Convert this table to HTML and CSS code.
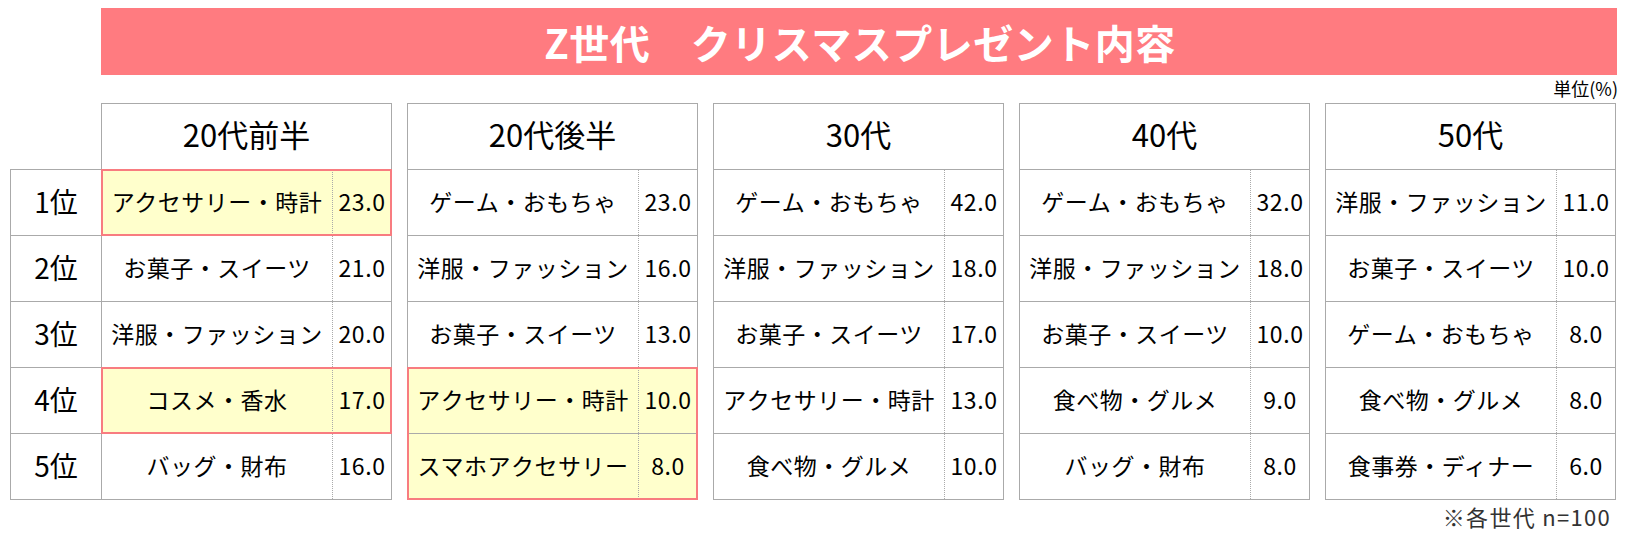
FILE: index.html
```html
<!DOCTYPE html>
<html lang="ja">
<head>
<meta charset="utf-8">
<title>Z世代 クリスマスプレゼント内容</title>
<link rel="stylesheet" href="styles.css">
</head>
<body>
<div class="page">
  <div class="banner">Z世代　クリスマスプレゼント内容</div>
  <div class="unit">単位(%)</div>
  <div class="tables">
    <div class="ranks">
      <div class="rank">1位</div>
      <div class="rank">2位</div>
      <div class="rank">3位</div>
      <div class="rank">4位</div>
      <div class="rank">5位</div>
    </div>

    <div class="panel">
      <div class="head">20代前半</div>
      <div class="hl">
        <div class="row"><div class="label">アクセサリー・時計</div><div class="val">23.0</div></div>
      </div>
      <div class="row"><div class="label">お菓子・スイーツ</div><div class="val">21.0</div></div>
      <div class="row"><div class="label">洋服・ファッション</div><div class="val">20.0</div></div>
      <div class="hl">
        <div class="row"><div class="label">コスメ・香水</div><div class="val">17.0</div></div>
      </div>
      <div class="row"><div class="label">バッグ・財布</div><div class="val">16.0</div></div>
    </div>

    <div class="panel">
      <div class="head">20代後半</div>
      <div class="row"><div class="label">ゲーム・おもちゃ</div><div class="val">23.0</div></div>
      <div class="row"><div class="label">洋服・ファッション</div><div class="val">16.0</div></div>
      <div class="row"><div class="label">お菓子・スイーツ</div><div class="val">13.0</div></div>
      <div class="hl">
        <div class="row"><div class="label">アクセサリー・時計</div><div class="val">10.0</div></div>
        <div class="row"><div class="label">スマホアクセサリー</div><div class="val">8.0</div></div>
      </div>
    </div>

    <div class="panel">
      <div class="head">30代</div>
      <div class="row"><div class="label">ゲーム・おもちゃ</div><div class="val">42.0</div></div>
      <div class="row"><div class="label">洋服・ファッション</div><div class="val">18.0</div></div>
      <div class="row"><div class="label">お菓子・スイーツ</div><div class="val">17.0</div></div>
      <div class="row"><div class="label">アクセサリー・時計</div><div class="val">13.0</div></div>
      <div class="row"><div class="label">食べ物・グルメ</div><div class="val">10.0</div></div>
    </div>

    <div class="panel">
      <div class="head">40代</div>
      <div class="row"><div class="label">ゲーム・おもちゃ</div><div class="val">32.0</div></div>
      <div class="row"><div class="label">洋服・ファッション</div><div class="val">18.0</div></div>
      <div class="row"><div class="label">お菓子・スイーツ</div><div class="val">10.0</div></div>
      <div class="row"><div class="label">食べ物・グルメ</div><div class="val">9.0</div></div>
      <div class="row"><div class="label">バッグ・財布</div><div class="val">8.0</div></div>
    </div>

    <div class="panel">
      <div class="head">50代</div>
      <div class="row"><div class="label">洋服・ファッション</div><div class="val">11.0</div></div>
      <div class="row"><div class="label">お菓子・スイーツ</div><div class="val">10.0</div></div>
      <div class="row"><div class="label">ゲーム・おもちゃ</div><div class="val">8.0</div></div>
      <div class="row"><div class="label">食べ物・グルメ</div><div class="val">8.0</div></div>
      <div class="row"><div class="label">食事券・ディナー</div><div class="val">6.0</div></div>
    </div>
  </div>
  <div class="note">※各世代 n=100</div>
</div>
</body>
</html>
```

FILE: styles.css
```css
* { box-sizing: border-box; }

html, body {
  margin: 0;
  padding: 0;
  background: #ffffff;
}

body {
  font-family: "Noto Sans CJK JP", "Noto Sans", sans-serif;
  color: #000;
}

.page {
  width: 1627px;
  padding: 8px 10px 0 10px;
}

.banner {
  margin-left: 91px;
  width: 1516px;
  height: 67px;
  background: #ff7b80;
  color: #fff;
  font-weight: bold;
  font-size: 40px;
  letter-spacing: 0.5px;
  display: flex;
  align-items: center;
  justify-content: center;
  line-height: 1;
  padding-top: 1px;
  padding-left: 2px;
}

.unit {
  width: 1608px;
  height: 28px;
  text-align: right;
  font-size: 18px;
  line-height: 26px;
}

.tables {
  display: flex;
  align-items: flex-start;
  gap: 15px;
}

.ranks {
  width: 91px;
  margin-top: 66px;
  margin-right: -15px;
  border-left: 1px solid #aaaaaa;
  border-bottom: 1px solid #aaaaaa;
  display: flex;
  flex-direction: column;
}

.rank {
  height: 66px;
  border-top: 1px solid #aaaaaa;
  display: flex;
  align-items: center;
  justify-content: center;
  font-size: 28px;
  padding-bottom: 4px;
}

.panel {
  width: 291px;
  border-left: 1px solid #aaaaaa;
  border-right: 1px solid #aaaaaa;
  border-bottom: 1px solid #aaaaaa;
  display: flex;
  flex-direction: column;
}

.head {
  height: 66px;
  border-top: 1px solid #aaaaaa;
  display: flex;
  align-items: center;
  justify-content: center;
  font-size: 31px;
  padding-bottom: 6px;
}

.row {
  height: 66px;
  border-top: 1px solid #aaaaaa;
  display: grid;
  grid-template-columns: 231px 1fr;
  font-size: 23px;
}

.label {
  border-right: 1px dotted #aaaaaa;
  display: flex;
  align-items: center;
  justify-content: center;
  white-space: nowrap;
  letter-spacing: 0.5px;
  padding-bottom: 4px;
}

.val {
  display: flex;
  align-items: center;
  justify-content: center;
  font-size: 23px;
  letter-spacing: 0.6px;
  padding-bottom: 4px;
}

.hl {
  position: relative;
  background: #ffffcc;
}

.hl::after {
  content: "";
  position: absolute;
  top: 0;
  left: -1px;
  right: -1px;
  bottom: -1px;
  border: 2px solid #f87c80;
  pointer-events: none;
  z-index: 2;
}

.note {
  width: 1601px;
  text-align: right;
  font-size: 22px;
  letter-spacing: 1.3px;
  line-height: 32px;
  color: #333333;
}
```
